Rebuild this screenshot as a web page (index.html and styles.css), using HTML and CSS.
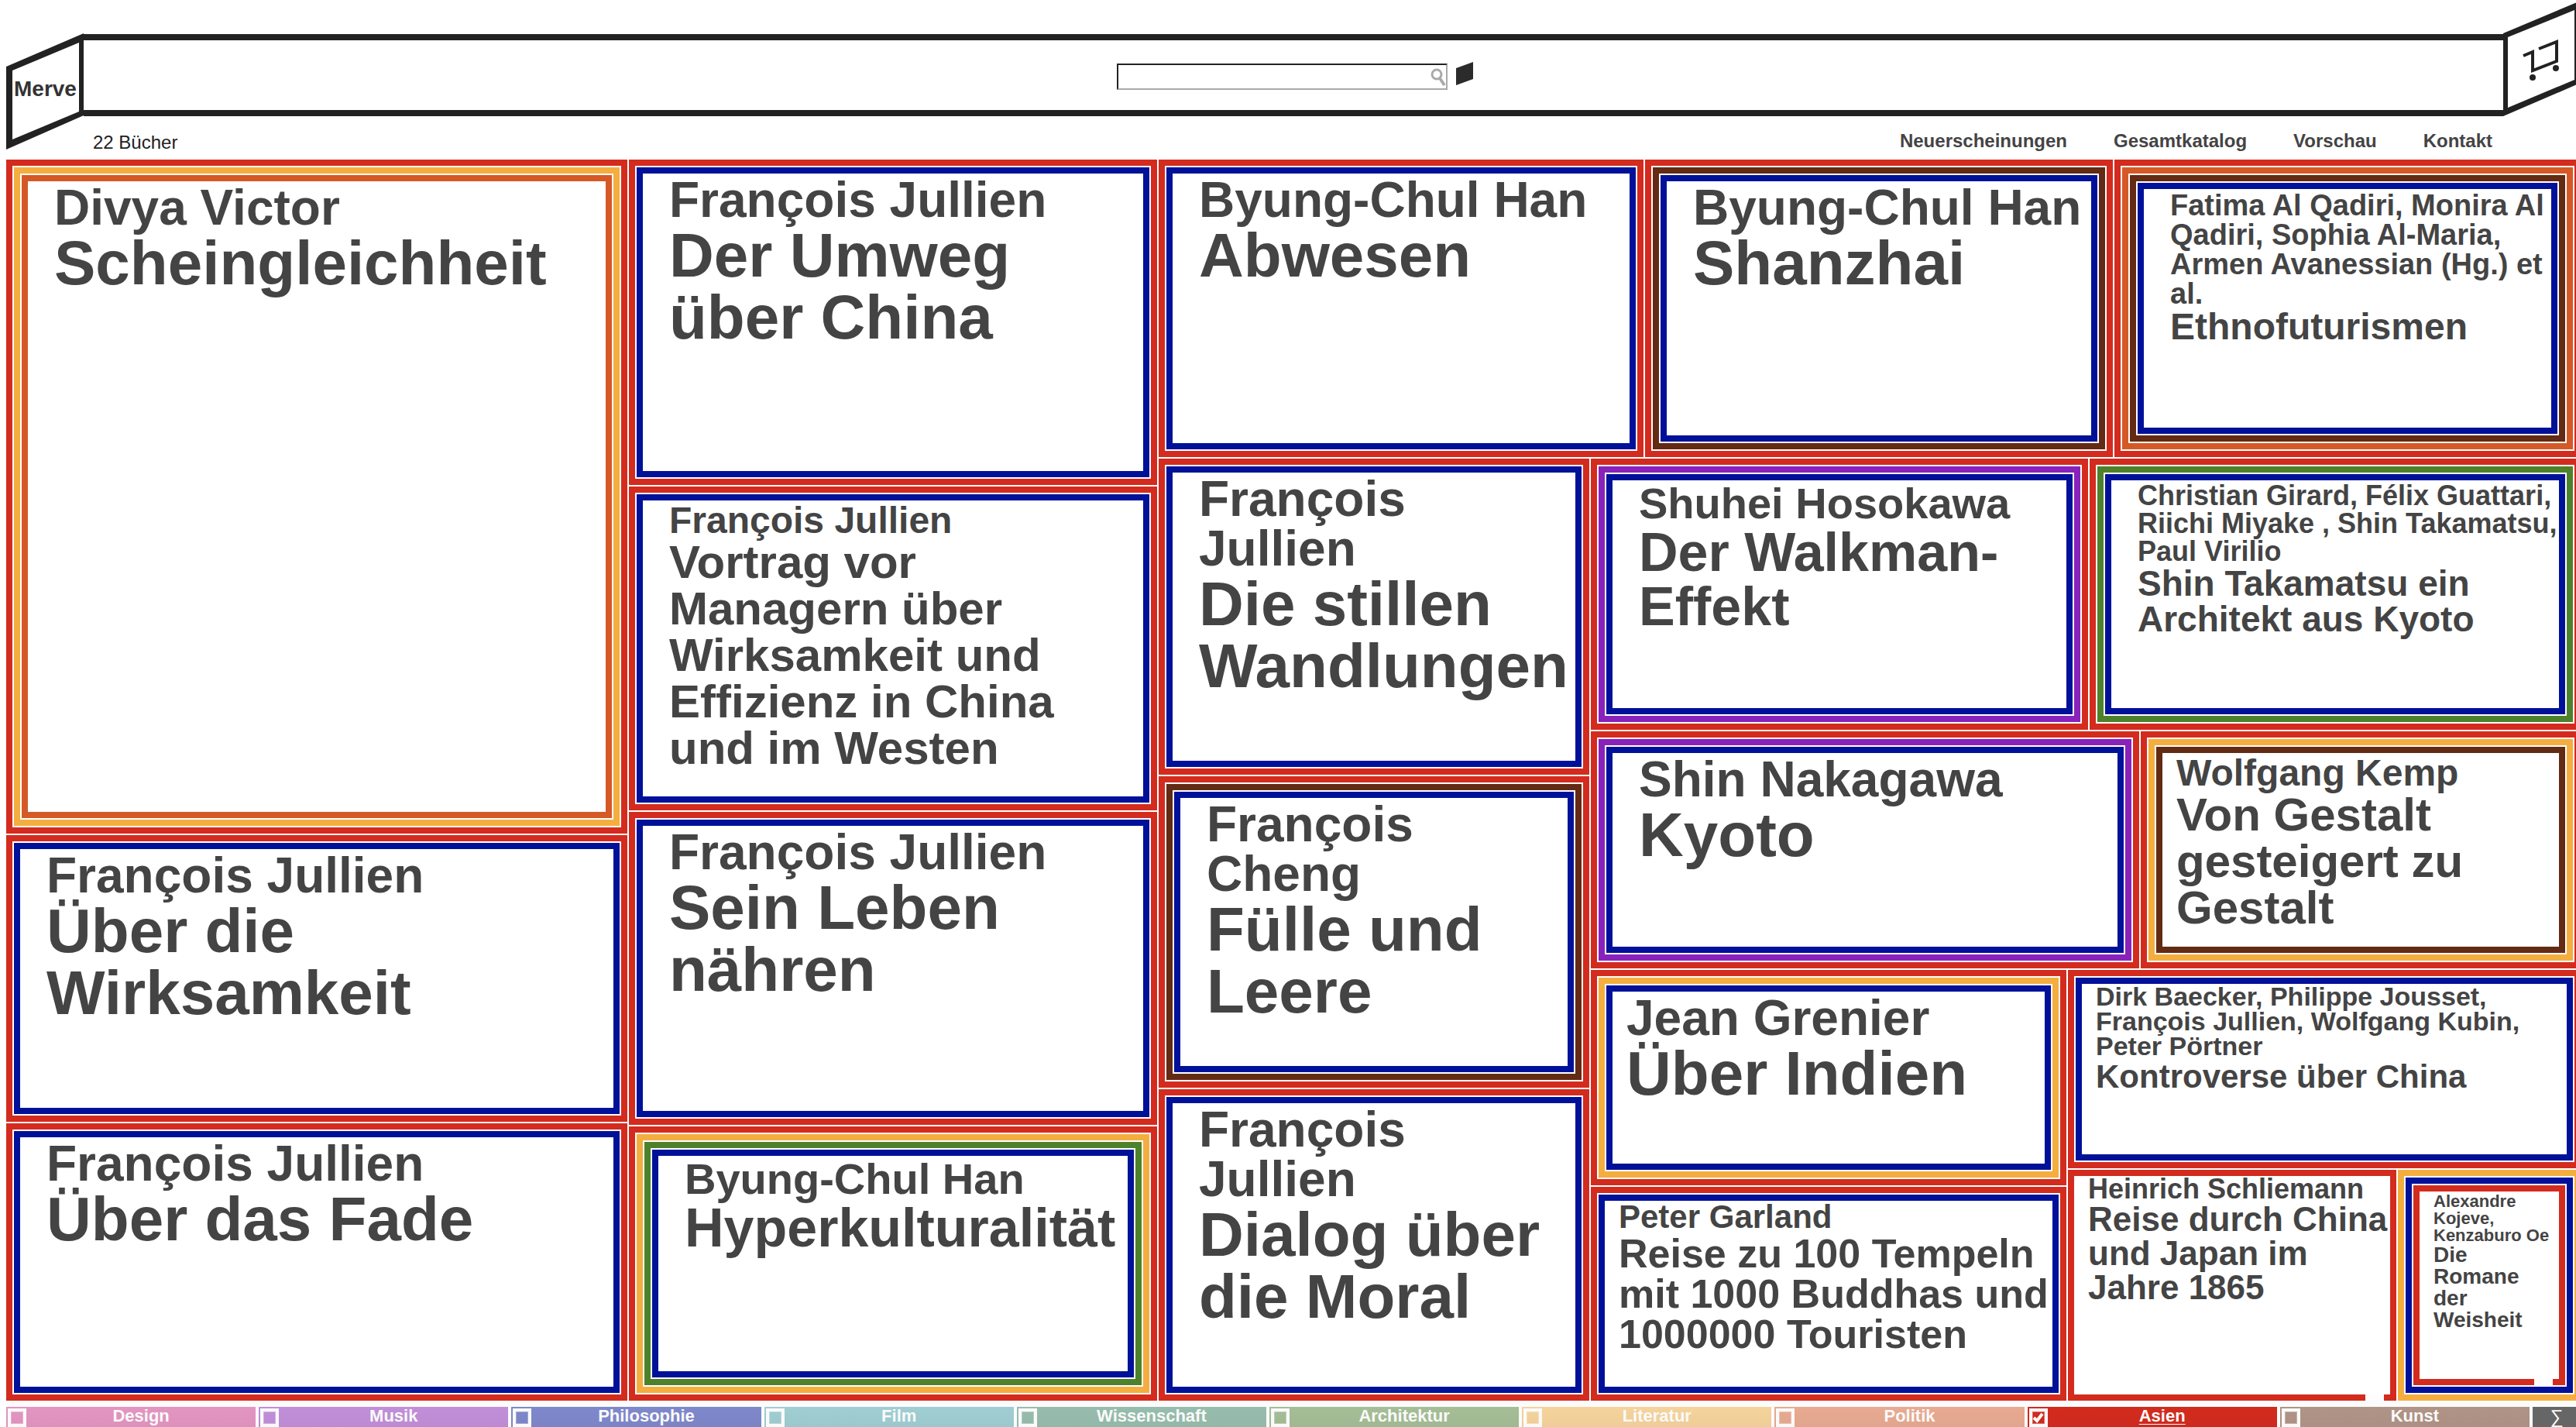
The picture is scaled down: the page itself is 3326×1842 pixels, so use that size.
FILE: index.html
```html
<!DOCTYPE html>
<html lang="de">
<head>
<meta charset="utf-8">
<title>Merve Verlag – Asien</title>
<link rel="stylesheet" href="styles.css">
</head>
<body>
<div class="page">
  <header class="header">
    <a class="logo" href="#" aria-label="Merve">
      <svg width="100" height="194" viewBox="0 0 100 194">
        <path fill="#222" fill-rule="evenodd" d="M0 86 100 43V149L0 193ZM8 91V180L94 144V55Z"/>
        <text class="logo-text" x="10" y="124">Merve</text>
      </svg>
    </a>
    <form class="beam" role="search">
      <div class="search-box">
        <input class="search" type="search" aria-label="Suche">
        <svg class="lens" width="20" height="24" viewBox="0 0 20 24" fill="none" stroke="#aaa" stroke-width="3">
          <circle cx="8" cy="8" r="6"/><path d="M12 13 18 22" stroke-width="4"/>
        </svg>
      </div>
      <button class="go" type="submit" aria-label="Suchen">
        <svg width="22" height="30" viewBox="0 0 22 30"><path fill="#2b2b2b" d="M0 8 22 0V22L0 30Z"/></svg>
      </button>
    </form>
    <div class="subline">
      <span class="count">22 Bücher</span>
      <nav class="menu">
        <a href="#">Neuerscheinungen</a>
        <a href="#">Gesamtkatalog</a>
        <a href="#">Vorschau</a>
        <a href="#">Kontakt</a>
      </nav>
    </div>
    <a class="cart" href="#" aria-label="Warenkorb">
      <svg width="100" height="152" viewBox="0 0 100 152">
        <path fill="#222" fill-rule="evenodd" d="M0 43 100 1V107L0 150ZM6 48V139L92 103V13Z"/>
        <path fill="none" stroke="#222" stroke-width="4" d="M26 72 38 67V91L69 79V54L46 63"/>
        <circle cx="38" cy="100" r="4" fill="#222"/><circle cx="68" cy="88" r="4" fill="#222"/>
      </svg>
    </a>
  </header>

  <main class="shelf cells">
    <div class="column-a cells">
      <a class="book frames-3 red yellow-2 orange-3" href="#"><span class="author">Divya Victor</span><span class="title">Scheingleichheit</span></a>
      <a class="book frames-2 red blue-2" href="#"><span class="author">François Jullien</span><span class="title">Über die Wirksamkeit</span></a>
      <a class="book frames-2 red blue-2" href="#"><span class="author">François Jullien</span><span class="title">Über das Fade</span></a>
    </div>
    <div class="column-b cells">
      <a class="book frames-2 red blue-2" href="#"><span class="author">François Jullien</span><span class="title">Der Umweg über China</span></a>
      <a class="book frames-2 red blue-2 size-60" href="#"><span class="author">François Jullien</span><span class="title">Vortrag vor Managern über Wirksamkeit und Effizienz in China und im Westen</span></a>
      <a class="book frames-2 red blue-2" href="#"><span class="author">François Jullien</span><span class="title">Sein Leben nähren</span></a>
      <a class="book frames-4 red yellow-2 green-3 blue-4 size-70" href="#"><span class="author">Byung-Chul Han</span><span class="title">Hyperkulturalität</span></a>
    </div>
    <div class="area cells">
      <div class="area-top cells">
        <a class="book frames-2 red blue-2" href="#"><span class="author">Byung-Chul Han</span><span class="title">Abwesen</span></a>
        <a class="book frames-3 red brown-2 blue-3" href="#"><span class="author">Byung-Chul Han</span><span class="title">Shanzhai</span></a>
        <a class="book frames-4 red orange-2 brown-3 blue-4 size-48" href="#"><span class="author">Fatima Al Qadiri, Monira Al Qadiri, Sophia Al-Maria, Armen Avanessian (Hg.) et al.</span><span class="title">Ethnofuturismen</span></a>
      </div>
      <div class="area-bottom cells">
        <div class="column-c cells">
          <a class="book frames-2 red blue-2" href="#"><span class="author">François Jullien</span><span class="title">Die stillen Wandlungen</span></a>
          <a class="book frames-3 red brown-2 blue-3" href="#"><span class="author">François Cheng</span><span class="title">Fülle und Leere</span></a>
          <a class="book frames-2 red blue-2" href="#"><span class="author">François Jullien</span><span class="title">Dialog über die Moral</span></a>
        </div>
        <div class="block cells">
          <div class="row-walkman cells">
            <a class="book frames-3 red purple-2 blue-3 size-70" href="#"><span class="author">Shuhei Hosokawa</span><span class="title">Der Walkman-Effekt</span></a>
            <a class="book frames-3 red green-2 blue-3 size-46" href="#"><span class="author">Christian Girard, Félix Guattari, Riichi Miyake , Shin Takamatsu, Paul Virilio</span><span class="title">Shin Takamatsu ein Architekt aus Kyoto</span></a>
          </div>
          <div class="row-kyoto cells">
            <a class="book frames-3 red purple-2 blue-3" href="#"><span class="author">Shin Nakagawa</span><span class="title">Kyoto</span></a>
            <a class="book frames-3 red yellow-2 brown-3 size-60 narrow" href="#"><span class="author">Wolfgang Kemp</span><span class="title">Von Gestalt gesteigert zu Gestalt</span></a>
          </div>
          <div class="row-last cells">
            <div class="column-d cells">
              <a class="book frames-3 red yellow-2 blue-3 narrow" href="#"><span class="author">Jean Grenier</span><span class="title">Über Indien</span></a>
              <a class="book frames-2 red blue-2 size-52 narrow" href="#"><span class="author">Peter Garland</span><span class="title">Reise zu 100 Tempeln mit 1000 Buddhas und 1000000 Touristen</span></a>
            </div>
            <div class="column-e cells">
              <a class="book frames-2 red blue-2 size-42 narrow" href="#"><span class="author">Dirk Baecker, Philippe Jousset, François Jullien, Wolfgang Kubin, Peter Pörtner</span><span class="title">Kontroverse über China</span></a>
              <div class="pair cells">
                <a class="book frames-1 red size-44 narrow notch" href="#"><span class="author">Heinrich Schliemann</span><span class="title">Reise durch China und Japan im Jahre 1865</span></a>
                <a class="book frames-3 yellow blue-2 red-3 size-28 narrow notch" href="#"><span class="author">Alexandre Kojeve, Kenzaburo Oe</span><span class="title">Die Romane der Weisheit</span></a>
              </div>
            </div>
          </div>
        </div>
      </div>
    </div>
  </main>

  <footer class="filters">
    <label class="filter design"><input type="checkbox"><span>Design</span></label>
    <label class="filter musik"><input type="checkbox"><span>Musik</span></label>
    <label class="filter philosophie"><input type="checkbox"><span>Philosophie</span></label>
    <label class="filter film"><input type="checkbox"><span>Film</span></label>
    <label class="filter wissenschaft"><input type="checkbox"><span>Wissenschaft</span></label>
    <label class="filter architektur"><input type="checkbox"><span>Architektur</span></label>
    <label class="filter literatur"><input type="checkbox"><span>Literatur</span></label>
    <label class="filter politik"><input type="checkbox"><span>Politik</span></label>
    <label class="filter asien"><input type="checkbox" checked><span>Asien</span></label>
    <label class="filter kunst"><input type="checkbox"><span>Kunst</span></label>
    <button class="sum" type="button">∑</button>
  </footer>
</div>
</body>
</html>
```
FILE: styles.css
```css
:root {
  --red: #d32b1e;
  --yellow: #f4ae3f;
  --orange: #d55926;
  --blue: #001199;
  --brown: #632a14;
  --green: #4e812b;
  --purple: #8822bb;
}

* { box-sizing: border-box; }

body {
  margin: 0;
  overflow-x: hidden;
  background: #fff;
  color: #444;
  font-family: "Liberation Sans", Arial, sans-serif;
  font-size: 24px;
}

a { color: inherit; text-decoration: none; }

svg { display: block; }

/* the page runs slightly past the right edge of the window */
.page {
  display: flex;
  flex-direction: column;
  min-height: 100vh;
  margin: 0 -6px 0 8px;
}

/* header */
.header {
  display: grid;
  grid-template-columns: 100px 1fr 100px;
  grid-template-rows: 150px 56px;
}

.logo { grid-row: 1 / 3; }

.logo-text {
  fill: #333;
  font-size: 28px;
  font-weight: bold;
}

.cart { grid-column: 3; grid-row: 1 / 3; }

.beam {
  grid-column: 2;
  grid-row: 1;
  display: flex;
  align-items: center;
  justify-content: center;
  gap: 11px;
  margin-top: 44px;
  padding: 4px 0 0 4px;
  border-top: 8px solid #222;
  border-bottom: 8px solid #222;
}

.search-box { position: relative; }

.search {
  display: block;
  width: 427px;
  height: 34px;
  padding: 0 28px 0 4px;
  border: 2px solid;
  border-color: #222 #aaa #aaa #222;
  border-radius: 0;
  background: #fff;
  font: inherit;
  appearance: none;
}

.lens { position: absolute; top: 6px; right: 2px; }

.go {
  align-self: flex-start;
  margin-top: 24px;
  padding: 0;
  border: 0;
  background: none;
}

.subline {
  grid-column: 2;
  grid-row: 2;
  display: flex;
  justify-content: space-between;
  align-items: center;
  padding: 8px 14px 0 12px;
  line-height: 28px;
}

.count { padding-top: 4px; color: #222; }

.menu { display: flex; gap: 60px; font-weight: bold; }

/* the wall of books */
.cells { display: grid; gap: 2px; }

.shelf { flex: 1; grid-template-columns: minmax(0, 802fr) minmax(0, 682fr) minmax(0, 1836fr); }
.column-a { grid-template-rows: 870fr 370fr 358fr; }
.column-b { grid-template-rows: 420fr 418fr 404fr 354fr; }
.area { grid-template-rows: 384fr 1216fr; }
.area-top { grid-template-columns: minmax(0, 626fr) minmax(0, 604fr) minmax(0, 602fr); }
.area-bottom { grid-template-columns: minmax(0, 556fr) minmax(0, 1278fr); }
.column-c { grid-template-rows: 408fr 402fr 402fr; }
.block { grid-template-rows: 350fr 306fr 556fr; }
.row-walkman { grid-template-columns: minmax(0, 642fr) minmax(0, 634fr); }
.row-kyoto { grid-template-columns: minmax(0, 708fr) minmax(0, 568fr); }
.row-last { grid-template-columns: minmax(0, 614fr) minmax(0, 662fr); }
.column-d { grid-template-rows: 278fr 276fr; }
.column-e { grid-template-rows: 256fr 298fr; }
.pair { grid-template-columns: minmax(0, 424fr) minmax(0, 236fr); }

/* one book: up to four nested frames of 8px with 2px between them */
.book {
  --inset: 34px;
  --top: 2px;
  --end: 2px;
  --author: 64px;
  --author-line: 64px;
  --title: 80px;
  --title-line: var(--title);
  position: relative;
  padding: calc(var(--frame) + var(--top)) calc(var(--frame) + var(--end)) var(--frame) calc(var(--frame) + var(--inset));
  font-weight: bold;
}

.author, .title { display: block; }
.author { font-size: var(--author); line-height: var(--author-line); }
.title { font-size: var(--title); line-height: var(--title-line); }

.frames-1 { --frame: 8px; box-shadow: inset 0 0 0 8px var(--c1); }
.frames-2 {
  --frame: 18px;
  box-shadow: inset 0 0 0 8px var(--c1), inset 0 0 0 10px #fff, inset 0 0 0 18px var(--c2);
}
.frames-3 {
  --frame: 28px;
  box-shadow: inset 0 0 0 8px var(--c1), inset 0 0 0 10px #fff, inset 0 0 0 18px var(--c2),
    inset 0 0 0 20px #fff, inset 0 0 0 28px var(--c3);
}
.frames-4 {
  --frame: 38px;
  box-shadow: inset 0 0 0 8px var(--c1), inset 0 0 0 10px #fff, inset 0 0 0 18px var(--c2),
    inset 0 0 0 20px #fff, inset 0 0 0 28px var(--c3), inset 0 0 0 30px #fff, inset 0 0 0 38px var(--c4);
}

.red { --c1: var(--red); }
.yellow { --c1: var(--yellow); }
.blue-2 { --c2: var(--blue); }
.yellow-2 { --c2: var(--yellow); }
.brown-2 { --c2: var(--brown); }
.orange-2 { --c2: var(--orange); }
.purple-2 { --c2: var(--purple); }
.green-2 { --c2: var(--green); }
.blue-3 { --c3: var(--blue); }
.orange-3 { --c3: var(--orange); }
.green-3 { --c3: var(--green); }
.brown-3 { --c3: var(--brown); }
.red-3 { --c3: var(--red); }
.blue-4 { --c4: var(--blue); }

.narrow { --inset: 18px; }
.size-70 { --author: 56px; --author-line: 56px; --title: 70px; }
.size-60 { --author: 48px; --author-line: 48px; --title: 60px; }
.size-52 { --top: 0px; --author: 42px; --author-line: 42px; --title: 52px; }
.size-48 { --author: 38px; --author-line: 38px; --title: 48px; }
.size-46 { --end: 0px; --author: 36px; --author-line: 36px; --title: 46px; }
.size-44 { --top: 0px; --end: 0px; --author: 36px; --author-line: 34px; --title: 44px; }
.size-42 { --top: 0px; --author: 34px; --author-line: 32px; --title: 42px; --title-line: 48px; }
.size-28 { --author: 22px; --author-line: 22px; --title: 28px; }

/* small opening in the lower edge of the innermost frame */
.notch::after {
  content: "";
  position: absolute;
  right: calc(var(--frame) + 8px);
  bottom: calc(var(--frame) - 8px);
  width: 24px;
  height: 8px;
  background: #fdfdfd;
}

/* subject filters */
.filters {
  display: grid;
  grid-template-columns: repeat(10, 1fr) 62px;
  gap: 4px;
  height: 34px;
  padding-top: 8px;
  background: #fbfbfb;
  color: #fafafa;
  font-size: 22px;
  font-weight: bold;
}

.filter {
  display: flex;
  align-items: flex-start;
  padding: 2px 0 0 2px;
  background-image: linear-gradient(transparent, rgba(0, 0, 0, .03));
}

.filter input {
  flex: none;
  width: 24px;
  height: 24px;
  margin: 0;
  border: 4px solid #fafafa;
  background: center / 16px no-repeat;
  box-shadow: inset 0 0 0 1px rgba(255, 255, 255, .3);
  appearance: none;
}

.filter input:checked {
  background-image: url("data:image/svg+xml,%3Csvg xmlns='http://www.w3.org/2000/svg' viewBox='0 0 16 16'%3E%3Cpath d='M2 8l4 4 7-9' fill='none' stroke='%23fff' stroke-width='4'/%3E%3C/svg%3E");
}

.filter span { flex: 1; line-height: 20px; text-align: center; }

.filter input:checked + span {
  text-decoration: underline;
  text-decoration-thickness: 1px;
  text-underline-offset: 3px;
}

.design { background-color: #e395c1; }
.musik { background-color: #c18fd9; }
.philosophie { background-color: #7f88cb; }
.film { background-color: #9fced3; }
.wissenschaft { background-color: #97bdae; }
.architektur { background-color: #a5be96; }
.literatur { background-color: #f5d39c; }
.politik { background-color: #e8aa91; }
.asien { background-color: var(--red); }
.kunst { background-color: #b09487; }

.sum {
  padding: 0;
  border: 0;
  background: #666;
  color: #fafafa;
  font: 24px/24px "Liberation Sans", Arial, sans-serif;
}
```
